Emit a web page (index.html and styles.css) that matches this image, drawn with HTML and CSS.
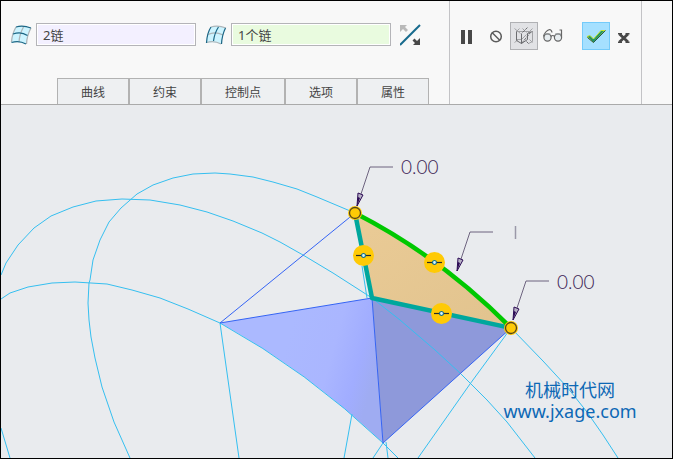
FILE: index.html
```html
<!DOCTYPE html>
<html lang="zh-CN">
<head>
<meta charset="utf-8">
<title>边界混合</title>
<link rel="stylesheet" href="styles.css">
</head>
<body>
<div class="app">
  <header class="dashboard">
    <section class="setup">
      <div class="fields">
        <div class="field">
          <label for="chain1" aria-label="第一方向"><svg class="icon" viewBox="0 0 22 22">
            <path d="M6 3Q13 1 21 4Q17 11 16.5 20Q9 17 1.500 18.500Q2 10 6 3Z" fill="#cdf4ff"/>
            <path d="M6 3Q2 10 1.500 18M13.500 3Q9.500 10 9 18M21 4Q17 11 16.500 20" fill="none" stroke="#adb5b9" stroke-width="1.300"/>
            <path d="M6 3Q13 1 21 4M3 10Q11 7 17.500 11.500M1.500 18.500Q9 16 16 20" fill="none" stroke="#1b6685" stroke-width="1.200"/>
          </svg></label>
          <input id="chain1" class="box lilac" type="text" value="2链">
        </div>
        <div class="field">
          <label for="chain2" aria-label="第二方向"><svg class="icon" viewBox="0 0 22 22">
            <path d="M6 3Q13 1 20.500 4Q17 11 16.500 20Q9 17 1.500 19Q2 10 6 3Z" fill="#cdf4ff"/>
            <path d="M6 3Q13 1 21 4M3 10.500Q10 7 18 11M1.500 18.500Q9 16 16 20" fill="none" stroke="#adb5b9" stroke-width="1.300"/>
            <path d="M6 3Q2 9 1.500 19M13.500 3Q9.500 9 8.500 17M20.500 4Q17 11 16.500 20" fill="none" stroke="#1b6685" stroke-width="1.200"/>
          </svg></label>
          <input id="chain2" class="box green" type="text" value="1个链">
        </div>
        <button class="flip" aria-label="反向"><svg class="icon" viewBox="0 0 22 22">
          <path d="M0 21L20 1" stroke="#176a8d" stroke-width="2"/>
          <path d="M0 1H7L5 3L8 6L6 8L3 5L0 8Z" fill="#b9b9b9"/>
          <path d="M20 21H13L15 19L12.500 16.500L14.500 14.500L17 17L20 14Z" fill="#484848"/>
        </svg></button>
      </div>
      <nav class="tabs">
        <button class="tab">曲线</button>
        <button class="tab">约束</button>
        <button class="tab">控制点</button>
        <button class="tab">选项</button>
        <button class="tab">属性</button>
      </nav>
    </section>
    <section class="actions">
      <div class="group">
        <button class="tool" aria-label="暂停"><svg viewBox="0 0 28 28"><path d="M9 8H13V22H9ZM16 8H20V22H16Z" fill="#484848"/></svg></button>
      </div>
      <div class="group">
        <button class="tool" aria-label="无预览"><svg viewBox="0 0 28 28"><circle cx="14" cy="14.500" r="5.300" fill="none" stroke="#5b5b5b" stroke-width="1.500"/><path d="M10 10.500L18 18.500" stroke="#5b5b5b" stroke-width="1.500"/></svg></button>
        <button class="tool pressed" aria-label="分离预览" aria-pressed="true"><svg viewBox="0 0 28 28" fill="none">
          <path d="M6.500 9.500H20.500M4.500 6.500L10.500 11.500M9.500 6.500L6.500 9.500M22.500 6.500L17.500 11.500M12.500 6.500L16.500 10.500M4.500 20.500L8.500 17.500M6.500 17.500H11.500L16.500 12.500M22.500 20.500L19.500 17.500M22.500 9.500V19.500L18.500 21.500" stroke="#a2a3a6" stroke-width="1"/>
          <path d="M6.500 9.500V18.500L11.500 21.500V11.500M17.500 11.500V17.500L11.500 21.500M17.500 11.500L22.500 9.500M18.500 21.500L16.500 19.500" stroke="#6c6d70" stroke-width="1"/>
          <path d="M12.500 10.500L17.500 5.500M11.500 21.500L20.500 10.500" stroke="#6c6d70" stroke-dasharray="3 1"/>
        </svg></button>
        <button class="tool" aria-label="校验"><svg viewBox="0 0 28 28" fill="none">
          <circle cx="9.500" cy="15.500" r="3.600" fill="#e7edf0" stroke="#666" stroke-width="1.200"/><circle cx="20" cy="15.500" r="3.600" fill="#e7edf0" stroke="#666" stroke-width="1.200"/>
          <path d="M5.500 14.500Q7 9 11.500 7.500Q13.500 7.500 14 10.500M23.500 15V8H21.500M13 14.500Q14.800 12.500 16.500 14.500" stroke="#666" stroke-width="1.200"/>
          <path d="M6.500 12H12.500M17 12H23" stroke="#9aa0a3"/>
        </svg></button>
      </div>
      <div class="group confirm">
        <button class="tool accept" aria-label="确定"><svg viewBox="0 0 28 28"><path d="M5 14.500L8 13.500L11.500 17L19 8.500H23L11.500 20.500Z" fill="#219568" stroke="#c5e52d"/><path d="M5.500 15.500L11.500 20.500L23.500 8.500" fill="none" stroke="#28564b"/></svg></button>
        <button class="tool" aria-label="取消"><svg viewBox="0 0 28 28"><path d="M9.500 12L18 20M18 12L9.500 20" stroke="#484848" stroke-width="2.800"/><path d="M8 11.700H12M15.500 11.700H19.500M8 20.300H12M15.500 20.300H19.500" stroke="#484848" stroke-width="1.400"/></svg></button>
      </div>
    </section>
    <div class="rest"></div>
  </header>
  <main class="viewport">
    <svg class="scene" viewBox="1 105 671 353" preserveAspectRatio="xMinYMin slice">
      <defs>
        <linearGradient id="leftFace" gradientUnits="userSpaceOnUse" x1="290" y1="330" x2="380" y2="355">
          <stop offset="0" stop-color="#abb9ff"/><stop offset=".5" stop-color="#aab6ff"/><stop offset=".8" stop-color="#a1adff"/><stop offset="1" stop-color="#9facf2"/>
        </linearGradient>
        <linearGradient id="topFace" x1="0" y1="0" x2="1" y2="1">
          <stop offset="0" stop-color="#eacb96"/><stop offset="1" stop-color="#e1c38e"/>
        </linearGradient>
        <g id="arrow">
          <path d="M0 0L13 -39H36" class="leader"/>
          <path d="M0 0L1 -13L6 -11Z" class="head"/><path d="M0 0L1 -9L3 -8Z" fill="#2c0b55"/>
        </g>
        <g id="handle">
          <circle r="10.500" fill="#ffca05"/><path d="M-7.500 0H7.500" stroke="#262a2a" stroke-width="1.200"/><circle r="2" fill="#d8f8ff" stroke="#16708a" stroke-width="1.200"/>
        </g>
        <g id="node">
          <circle r="7" fill="#ffca05"/><circle r="5.500" fill="#ffca05" stroke="#54451d" stroke-width="1.300"/>
        </g>
      </defs>

      <path d="M220 323L372 298L383 443Q307 371 220 323Z" fill="url(#leftFace)"/>
      <path d="M372 298L511 328L383 443Z" fill="#8e99da"/>
      <path d="M355 213Q441 257 511 328L372 298Z" fill="url(#topFace)"/>

      <g class="curve">
        <path d="M1 275L6 263L18 245L34 228L51 216L73 207L96 201L122 199L150 200L180 205L207 212L233 221L262 233L280 242L303 255L333 273L372 298L400 320L435 350L460 373L487 400L507 422L535 458"/>
        <path d="M130 458L114 422L102 387L95 358L91 337L89 320L88 303L89 283L90 280L93 260L100 240L109 222L121 208L137 194L153 185L173 178L193 174L215 173L230 174L253 177L273 182L297 189L317 197L355 213"/>
        <path d="M511 328L543 361L567 387L587 412L603 435L618 458"/>
        <path d="M1 299L10 293L28 287L52 283L75 282L107 284L132 290L160 298L188 309L220 323Q307 371 383 443L398 458"/>
        <path d="M1 428L10 458M220 323L239 458M352 414L344 458M386 442L388 458M383 443L373 458M511 328L470 384L418 458M362 266L367 298"/>
      </g>
      <path class="edge" d="M355 213L220 323L372 298L383 443L511 328"/>
      <path class="side" d="M355 213L372 298L511 328"/>
      <path class="chain" d="M355 213Q441 257 511 328"/>

      <use href="#arrow" x="357" y="206"/>
      <use href="#arrow" x="457" y="271"/>
      <use href="#arrow" x="513" y="320"/>
      <path d="M515.500 226V239" stroke="#9b98a8" stroke-width="1.500"/>
      <use href="#node" x="355" y="213"/>
      <use href="#node" x="511" y="328"/>
      <use href="#handle" x="363.500" y="255.500"/>
      <use href="#handle" x="434.500" y="262.500"/>
      <use href="#handle" x="441.500" y="313.500"/>
      <text class="dim" x="401" y="174">0.00</text>
      <text class="dim" x="557" y="289">0.00</text>
      <text class="mark"><tspan class="cjk" x="570" y="397">机械时代网</tspan><tspan x="570" y="418">www.jxage.com</tspan></text>
    </svg>
  </main>
</div>
</body>
</html>
```
FILE: styles.css
```css
* { box-sizing: border-box; }

body {
  margin: 0;
  font-family: "Noto Sans", "Noto Sans CJK SC", sans-serif;
  color: #444;
}

.app {
  display: flex;
  flex-direction: column;
  min-height: 100vh;
  border: 1px solid #000;
  background: #e9ebee;
}

button {
  padding: 0;
  border: 0;
  background: none;
  font: inherit;
  color: inherit;
}

svg { display: block; }

.dashboard {
  display: flex;
  background: #f8f8f8;
  border-bottom: 1px solid #aaa;
}

.setup {
  flex: 1;
  min-width: 0;
  display: flex;
  flex-direction: column;
  gap: 32px;
}

.fields {
  display: flex;
  align-items: center;
  gap: 9px;
  padding: 22px 27px 0 9px;
}

.field {
  flex: 1;
  min-width: 0;
  display: flex;
  align-items: center;
  gap: 4px;
}

.icon { width: 22px; height: 22px; }

.box {
  flex: 1;
  min-width: 0;
  height: 23px;
  padding: 0 6px;
  border: 1px solid #b4b4b8;
  outline: 1px solid #fff;
  outline-offset: -2px;
  font: inherit;
  font-size: 13px;
  color: #444;
}

.lilac { background: #f3f0ff; }
.green { background: #e9fbdf; }

.tabs {
  display: flex;
  padding-left: 56px;
}

.tab {
  height: 26px;
  padding: 0 23px;
  border: 1px solid #b2b2b2;
  border-bottom: 0;
  background: #eef0f2;
  font-size: 12px;
}

.actions {
  flex: none;
  display: flex;
  align-items: flex-start;
  width: 192px;
  padding: 21px 0 0 2px;
  border-left: 1px solid #c3c3c6;
}

.group { display: flex; margin-right: 2px; }
.confirm { margin: 0 0 0 14px; }

.tool {
  width: 28px;
  height: 28px;
}

.tool svg { width: 28px; height: 28px; }

.pressed { background: #e1e2e5; box-shadow: inset 0 0 0 1px #b0b1b4; }
.accept { background: #a5e0ff; box-shadow: inset 0 0 0 1px #74cbfa; }

.rest {
  flex: none;
  width: 31px;
  border-left: 1px solid #c3c3c6;
}

.viewport {
  flex: 1;
  display: flex;
  overflow: hidden;
}

.scene {
  flex: 1;
  width: 100%;
}

.curve path { fill: none; stroke: #35bff0; stroke-width: 1; }
.edge { fill: none; stroke: #3564f4; stroke-width: 1; }
.side { fill: none; stroke: #00a79d; stroke-width: 4.500; stroke-linejoin: round; }
.chain { fill: none; stroke: #00c800; stroke-width: 4.500; }
.leader { fill: none; stroke: #6d637f; stroke-width: 1; }
.head { fill: #b7b0c5; stroke: #2c0b55; stroke-width: 1; }

.dim {
  font-family: Lato, sans-serif;
  font-weight: 300;
  font-size: 19px;
  fill: #3c2355;
}

.mark {
  font-family: "Noto Sans", sans-serif;
  font-size: 18px;
  text-anchor: middle;
  fill: #0d68b5;
}

.cjk { font-family: "Noto Sans CJK SC", sans-serif; }
```
